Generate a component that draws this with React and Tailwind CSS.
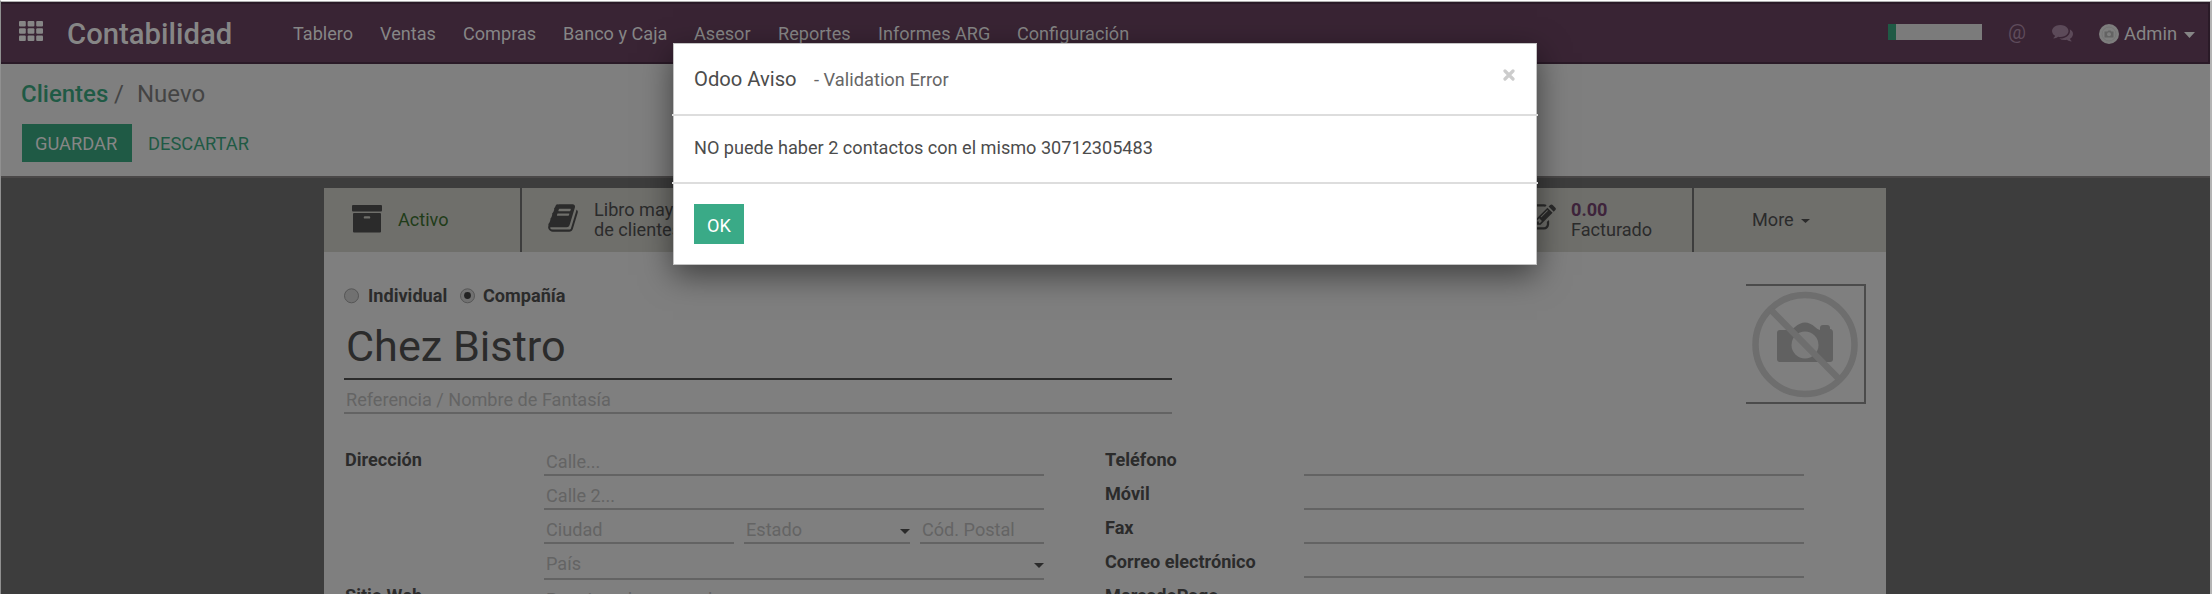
const menu = [
  ["Tablero", "w-[87px]"],
  ["Ventas", "w-[83px]"],
  ["Compras", "w-[100px]"],
  ["Banco y Caja", "w-[131px]"],
  ["Asesor", "w-[84px]"],
  ["Reportes", "w-[100px]"],
  ["Informes ARG", "w-[139px]"],
  ["Configuración", "w-[120px]"],
];

const icons = {
  book: "M1703 478q40 57 18 129l-275 906q-19 64-76.5 107.5t-122.5 43.5h-923q-77 0-148.5-53.5t-99.5-131.5q-24-67-2-127 0-4 3-27t4-37q1-8-3-21.5t-3-19.5q2-11 8-21t16.5-23.5 16.5-23.5q23-38 45-91.5t30-91.5q3-10 .5-30t-.5-28q3-11 17-28t17-23q21-36 42-92t25-90q1-9-2.5-32t.5-28q4-13 22-30.5t22-22.5q19-26 42.5-84.5t27.5-96.5q1-8-3-25.5t-2-26.5q2-8 9-18t18-23 17-21q8-12 16.5-30.5t15-35 16-36 19.5-32 26.5-23.5 36-11.5 47.5 5.5l-1 3q38-9 51-9h761q74 0 114 56t18 130l-274 906q-36 119-71.5 153.5t-128.5 34.5h-869q-27 0-38 15-11 16-1 43 24 70 144 70h923q29 0 56-15.5t35-41.5l300-987q7-22 5-57 38 15 59 43zm-1064 2q-4 13 2 22.5t20 9.5h608q13 0 25.5-9.5t16.5-22.5l21-64q4-13-2-22.5t-20-9.5h-608q-13 0-25.5 9.5t-16.5 22.5zm-83 256q-4 13 2 22.5t20 9.5h608q13 0 25.5-9.5t16.5-22.5l21-64q4-13-2-22.5t-20-9.5h-608q-13 0-25.5 9.5t-16.5 22.5z",
  edit: "M888 1184l116-116-152-152-116 116v56h96v96h56zm440-720q-16-16-33 1l-350 350q-17 17-1 33t33-1l350-350q17-17 1-33zm80 594v190q0 119-84.5 203.5t-203.5 84.5h-832q-119 0-203.5-84.5t-84.5-203.5v-832q0-119 84.5-203.5t203.5-84.5h832q63 0 117 25 15 7 18 23 3 17-9 29l-49 49q-14 14-32 8-23-6-45-6h-832q-66 0-113 47t-47 113v832q0 66 47 113t113 47h832q66 0 113-47t47-113v-126q0-13 9-22l64-64q15-15 35-7t20 29zm-96-738l288 288-672 672h-288v-288zm444 132l-92 92-288-288 92-92q28-28 68-28t68 28l152 152q28 28 28 68t-28 68z",
  comments: "M1408 768q0 139-94 257t-256.5 186.5-353.5 68.5q-86 0-176-16-124 88-278 128-36 9-86 16h-3q-11 0-20.5-8t-11.5-21q-1-3-1-6.5t.5-6.5 2-6l2.5-5 3.5-5.5 4-5 4.5-5 4-4.5q5-6 23-25t26-29.5 22.5-29 25-38.5 20.5-44q-124-72-195-177t-71-224q0-139 94-257t256.5-186.5 353.5-68.5 353.5 68.5 256.5 186.5 94 257zm384 256q0 120-71 224.5t-195 176.5q10 24 20.5 44t25 38.5 22.5 29 26 29.5 23 25q1 1 4 4.5t4.5 5 4 5 3.5 5.5l2.5 5 2 6 .5 6.5-1 6.5q-3 14-13 22t-22 7q-50-7-86-16-154-40-278-128-90 16-176 16-271 0-472-132 58 4 88 4 161 0 309-45t264-129q125-92 192-212t67-254q0-77-23-152 129 71 204 178t75 230z",
};

function Icon({ name, className }) {
  return (
    <svg viewBox="0 0 1792 1792" className={"shrink-0 " + className} fill="currentColor">
      <path d={icons[name]} />
    </svg>
  );
}

function Archive({ className }) {
  return (
    <svg viewBox="0 0 30 28" className={className} fill="currentColor">
      <rect width="30" height="6.6" rx="1" />
      <path fillRule="evenodd" d="M1 9q0-1 1-1h26q1 0 1 1v17.500q0 1-1 1H2q-1 0-1-1zM12.900 11.200a1.200 1.200 0 0 0 0 2.400h4.200a1.200 1.200 0 0 0 0-2.400z" />
    </svg>
  );
}

function Caret({ className }) {
  return (
    <svg viewBox="0 0 10 5" preserveAspectRatio="none" className={className} fill="currentColor">
      <path d="M0 0h10L5 5z" />
    </svg>
  );
}

function Apps() {
  return (
    <svg viewBox="0 0 24 20" className="h-5 w-6" fill="currentColor">
      {[0, 7.3, 14.6].map((y) => [0, 8.6, 17.2].map((x) => <rect key={x + "-" + y} x={x} y={y} width="6.8" height="5.4" rx="1" />))}
    </svg>
  );
}

function Navbar() {
  return (
    <header className="flex h-[62px] shrink-0 items-start border-y-2 border-r-2 border-[#2a1a27] bg-[#392434] pl-[18px] pt-[9px] leading-[26px] text-[#868686]">
      <div className="pt-[8px]"><Apps /></div>
      <div className="ml-[24px] w-[226px] pt-[8px] text-[29.3px] font-medium leading-[26px]">Contabilidad</div>
      <nav className="flex pt-[8px]">
        {menu.map(([label, width]) => (
          <span key={label} className={"whitespace-nowrap " + width}>{label}</span>
        ))}
      </nav>
      <div className="ml-auto flex pr-[13px]">
        <div className="mt-[11px] h-4 w-[94px] bg-[#7b7b7b]"><div className="h-4 w-2 bg-[#1f5a45]" /></div>
        <span className="ml-[26px] w-[44px] pt-[6px] text-[20px] text-[#5f4c5c]">@</span>
        <Icon name="comments" className="mt-[9px] size-[21px] text-[#5c4a59]" />
        <svg viewBox="0 0 20 20" className="ml-[26px] mt-[11px] size-5">
          <circle cx="10" cy="10" r="10" fill="#7e7e7e" />
          <circle cx="10" cy="10" r="7" fill="none" stroke="#757575" />
          <path d="M5.5 7.5h3l1-1h2l1 1h2v6h-9z" fill="#636363" />
          <circle cx="10" cy="10.3" r="2" fill="#7e7e7e" />
        </svg>
        <span className="ml-[5px] w-[60px] pt-[8px] text-[18.4px]">Admin</span>
        <Caret className="mt-[19px] h-[6px] w-[11px]" />
      </div>
    </header>
  );
}

function ControlPanel() {
  return (
    <div className="h-[114px] shrink-0 border-b-2 border-[#4a4848] pl-[20px] pt-[15px]">
      <div className="flex text-[24px] leading-[30px] text-[#444]">
        <span className="w-[93px] font-medium text-[#1f5a45]">Clientes</span>
        <span className="w-[23px]">/</span>
        <span>Nuevo</span>
      </div>
      <div className="ml-px mt-[15px] flex h-[38px] text-[18.3px] leading-[39px] text-[#1f5a45]">
        <span className="w-[110px] bg-[#1f5a45] pl-[13px] text-[#868686]">GUARDAR</span>
        <span className="ml-[16px]">DESCARTAR</span>
      </div>
    </div>
  );
}

function StatButtons() {
  return (
    <div className="flex h-16 shrink-0 bg-[#6f6f6b] leading-5">
      <div className="flex w-[198px] items-start border-r-2 border-[#3d3d3d] pl-[28px]">
        <Archive className="mt-[17px] h-[28px] w-[30px]" />
        <span className="ml-[16px] mt-[22px] text-[#1f3c19]">Activo</span>
      </div>
      <div className="flex w-[1172px] items-start border-r-2 border-[#3d3d3d] pl-[25px]">
        <Icon name="book" className="mt-[14px] size-8" />
        <span className="ml-[15px] mt-[12px] w-[150px] shrink-0">Libro mayor<br />de clientes</span>
        <Icon name="edit" className="ml-[780px] mt-[14px] size-8" />
        <span className="ml-[15px] mt-[12px]"><b className="font-bold text-[#3e243b]">0.00</b><br />Facturado</span>
      </div>
      <div className="flex items-start pl-[58px] pt-[22px]">
        <span>More</span>
        <Caret className="ml-[7px] mt-[9px] h-[4px] w-[9px]" />
      </div>
    </div>
  );
}

function Radio({ checked }) {
  return (
    <svg viewBox="0 0 16 16" className="size-4">
      <circle cx="7.5" cy="7.8" r="7" fill="#717171" stroke="#565656" />
      {checked && <circle cx="7.5" cy="7.5" r="3.4" fill="#222" />}
    </svg>
  );
}

function Field({ placeholder, className = "", caret }) {
  return (
    <div className={"flex h-[34px] shrink-0 items-start justify-between border-b-2 border-[#636363] pl-[2px] pt-[8px] leading-6 text-[#646464] " + className}>
      <span>{placeholder}</span>
      {caret && <Caret className="mt-[11px] h-[5px] w-[10px] text-[#2b2b2b]" />}
    </div>
  );
}

function NoPhoto() {
  return (
    <div className="h-[120px] w-[120px] border-y-2 border-r-2 border-[#4b4b4b]">
      <svg viewBox="0 0 118 116" className="h-[116px] w-[118px]">
        <path d="M31 47q0-3 3-3h9q3 0 6-3 5-4.500 10-4.500t10 4.500q3 3 5 3v-2q0-3 3-3h4q3 0 3 3v1q3 0 3 4v26q0 3-3 3H34q-3 0-3-3z" fill="#616161" />
        <circle cx="59" cy="59" r="13.5" fill="#7b7b7b" />
        <circle cx="59" cy="58.5" r="49.5" fill="none" stroke="#6e6e6e" strokeWidth="6.5" />
        <path d="M25 24l68 69" stroke="#6e6e6e" strokeWidth="6.5" />
      </svg>
    </div>
  );
}

function Sheet() {
  return (
    <main className="ml-[323px] mt-[10px] flex h-[406px] w-[1562px] shrink-0 flex-col bg-[#7f7f7f] text-[#2b2b2b]">
      <StatButtons />
      <div className="flex justify-between pl-5 pr-5 pt-8">
        <div className="w-[828px]">
          <div className="flex h-[28px] items-start font-bold leading-[24px]">
            <div className="pt-[4px]"><Radio /></div><span className="ml-2 w-[92px]">Individual</span>
            <div className="pt-[4px]"><Radio checked /></div><span className="ml-[7px]">Compañía</span>
          </div>
          <div className="h-[68px] border-b-2 border-[#2b2b2b] pl-[2px] pt-[8px] text-[43.2px] leading-[54px]">Chez Bistro</div>
          <Field placeholder="Referencia / Nombre de Fantasía" />
        </div>
        <NoPhoto />
      </div>
      <div className="mt-[28px] flex">
        <div className="flex w-[220px] flex-col pl-[21px] font-bold leading-[34px]">
          <span className="h-[137px] pt-[1px]">Dirección</span>
          <span>Sitio Web</span>
        </div>
        <div className="flex w-[500px] flex-col">
          <Field placeholder="Calle..." />
          <Field placeholder="Calle 2..." />
          <div className="flex gap-[10px]">
            <Field placeholder="Ciudad" className="w-[190px]" />
            <Field placeholder="Estado" className="w-[166px]" caret />
            <Field placeholder="Cód. Postal" className="w-[124px]" />
          </div>
          <Field placeholder="País" className="h-[36px]" caret />
          <Field placeholder="Por ejemplo www.odoo.com" />
        </div>
        <div className="ml-[61px] flex w-[199px] flex-col pt-[1px] font-bold leading-[34px]">
          {["Teléfono", "Móvil", "Fax", "Correo electrónico", "MercadoPago"].map((t) => <span key={t}>{t}</span>)}
        </div>
        <div className="flex w-[500px] flex-col"><Field /><Field /><Field /><Field /></div>
      </div>
    </main>
  );
}

function Dialog() {
  return (
    <section className="absolute left-[673px] top-[43px] flex h-[222px] w-[864px] flex-col border border-[#c4c4c4] bg-white text-[#4c4c4c] shadow-[0_10px_30px_rgba(0,0,0,0.5)]">
      <div className="-mx-[2px] flex h-[72px] shrink-0 items-start border-b-2 border-[#ddd] pl-[22px] pt-[22px] leading-[26px]">
        <span className="w-[120px] text-[20.2px]">Odoo Aviso</span>
        <span className="pt-px text-[18.3px] text-[#666]">- Validation Error</span>
        <svg viewBox="0 0 12 12" className="ml-auto mr-[23px] mt-[3px] size-3"><path d="M2 2l8 8M10 2l-8 8" stroke="#ccc" strokeWidth="3.2" strokeLinecap="round" /></svg>
      </div>
      <div className="-mx-[2px] h-[68px] shrink-0 border-b-2 border-[#ddd] pl-[22px] pt-[19px] leading-[26px]">NO puede haber 2 contactos con el mismo 30712305483</div>
      <div className="pl-5 pt-5">
        <button className="block h-10 w-[50px] bg-[#3aaa87] pt-[3px] text-white">OK</button>
      </div>
    </section>
  );
}

export default function App() {
  return (
    <div className="relative flex h-[594px] w-[2212px] flex-col overflow-hidden border-l border-r-2 border-t border-l-[#909090] border-r-[#b4b4b4] border-t-white bg-[#3d3d3d] font-['Roboto',sans-serif] text-[18.12px]">
      <div className="h-px shrink-0 bg-[#b0b0b0]" />
      <Navbar />
      <div className="bg-[#7f7f7f]"><ControlPanel /></div>
      <Sheet />
      <div className="absolute -left-px -top-px"><Dialog /></div>
    </div>
  );
}
